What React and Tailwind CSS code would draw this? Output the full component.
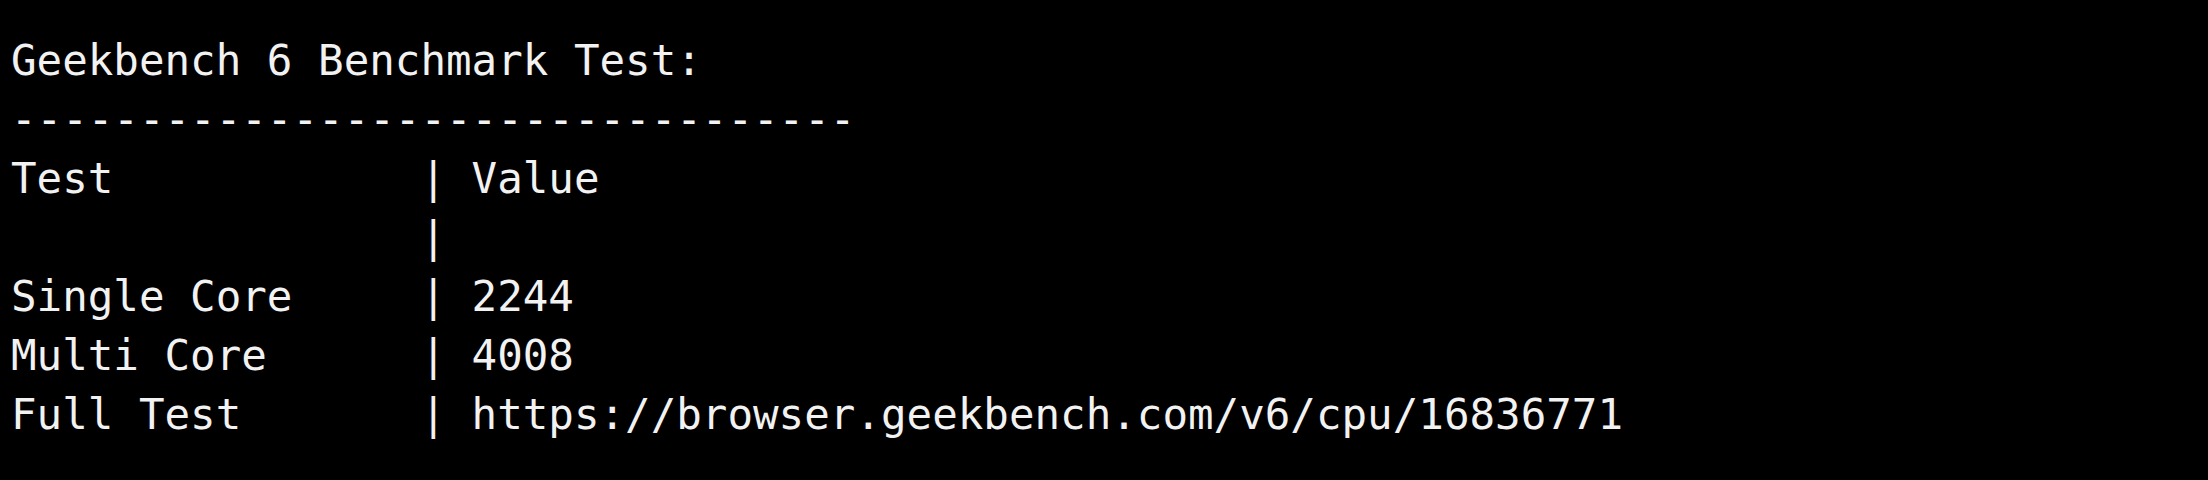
import React from 'react';

const rows = [
  ['Test', 'Value'],
  ['', ''],
  ['Single Core', '2244'],
  ['Multi Core', '4008'],
  ['Full Test', 'https://browser.geekbench.com/v6/cpu/16836771'],
];

const App = () => {
  return (
    <div className="w-[2208px] h-[480px] bg-black overflow-hidden">
      <pre className="pl-[11px] pt-[31px] text-[42.5px] leading-[59px] text-[#f2f2f2] font-['DejaVu_Sans_Mono',monospace] whitespace-pre">
        <div>Geekbench 6 Benchmark Test:</div>
        <div>{'-'.repeat(33)}</div>
        {rows.map(([name, value], i) => (
          <div key={i}>{`${name.padEnd(16, ' ')}| ${value}`}</div>
        ))}
      </pre>
    </div>
  );
};

export default App;
